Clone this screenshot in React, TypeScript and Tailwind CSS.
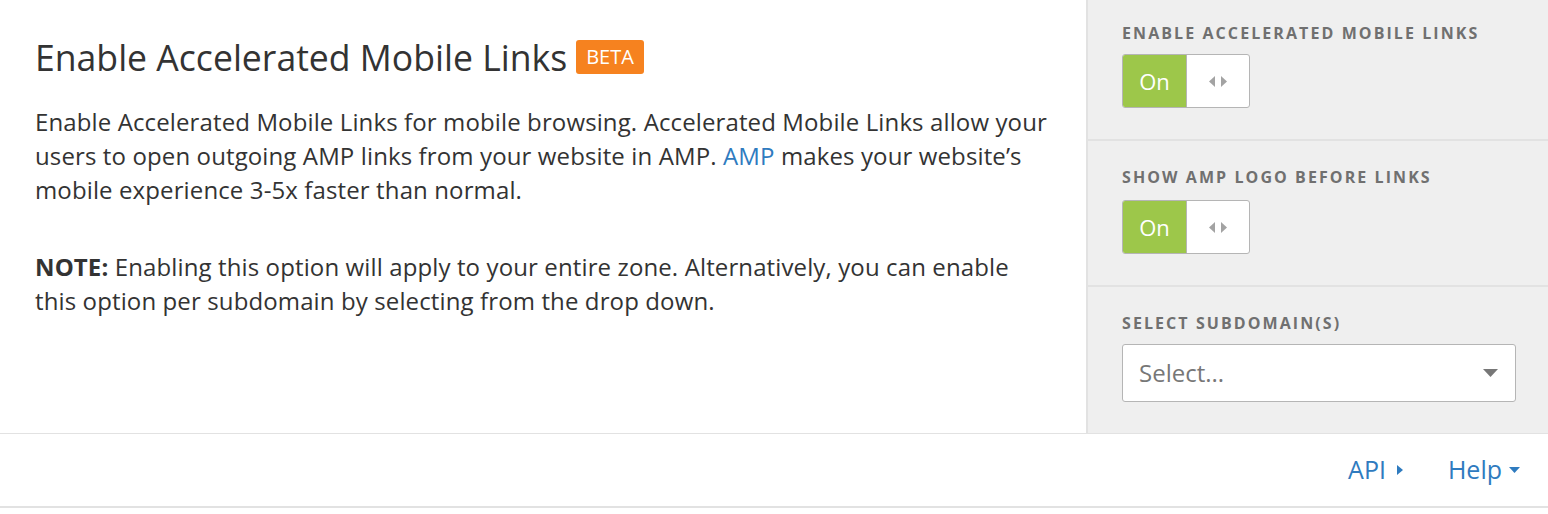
import React from 'react';

const Toggle = () => (
  <div className="flex h-[54px] w-[128px] overflow-hidden rounded-[3px] border border-[#b5b5b5] bg-white">
    <div className="flex w-[64px] items-center justify-center border-r border-[#b5b5b5] bg-[#9dc74a] text-[22px] text-white">
      On
    </div>
    <div className="flex flex-1 items-center justify-center gap-[6px]">
      <svg width="6" height="11" viewBox="0 0 6 11">
        <path d="M6 0 L0 5.5 L6 11 Z" fill="#a3a3a3" />
      </svg>
      <svg width="6" height="11" viewBox="0 0 6 11">
        <path d="M0 0 L6 5.5 L0 11 Z" fill="#a3a3a3" />
      </svg>
    </div>
  </div>
);

const Label = ({ children }: { children: React.ReactNode }) => (
  <div className="text-[16px] font-bold uppercase leading-none tracking-[0.13em] text-[#707070]">{children}</div>
);

export default function App() {
  return (
    <div className="min-h-[514px] bg-white font-['Open_Sans',sans-serif] text-[#333]">
      <div className="flex h-[434px] border-b border-[#e2e2e2]">
        <div className="flex-1 pl-[35px] pr-[20px] pt-[37px]">
          <div className="flex items-center">
            <h2 className="text-[35.6px] leading-[40px] text-[#333]">Enable Accelerated Mobile Links</h2>
            <span className="ml-[9px] rounded-[3px] bg-[#f6821f] px-[10px] py-[3px] text-[20px] leading-[28px] text-white">
              BETA
            </span>
          </div>
          <p className="mt-[28px] max-w-[1030px] text-[24px] leading-[34px] tracking-[0.12px]">
            Enable Accelerated Mobile Links for mobile browsing. Accelerated Mobile Links allow your users to open
            outgoing AMP links from your website in AMP. <span className="text-[#2f7bbf]">AMP</span> makes your
            website’s mobile experience 3-5x faster than normal.
          </p>
          <p className="mt-[43px] max-w-[995px] text-[24px] leading-[34px] tracking-[0.12px]">
            <span className="font-bold">NOTE:</span> Enabling this option will apply to your entire zone.
            Alternatively, you can enable this option per subdomain by selecting from the drop down.
          </p>
        </div>
        <div className="flex w-[462px] flex-col border-l-2 border-[#e2e2e2] bg-[#efefef]">
          <div className="h-[141px] border-b-2 border-[#e2e2e2] pl-[34px] pt-[25px]">
            <Label>Enable Accelerated Mobile Links</Label>
            <div className="mt-[13px]">
              <Toggle />
            </div>
          </div>
          <div className="h-[146px] border-b-2 border-[#e2e2e2] pl-[34px] pt-[28px]">
            <Label>Show AMP Logo Before Links</Label>
            <div className="mt-[15px]">
              <Toggle />
            </div>
          </div>
          <div className="flex-1 pl-[34px] pr-[32px] pt-[28px]">
            <Label>Select Subdomain(s)</Label>
            <div className="mt-[13px] flex h-[58px] items-center justify-between rounded-[3px] border border-[#b5b5b5] bg-white pl-[16px] pr-[17px]">
              <span className="text-[24px] text-[#777]">Select...</span>
              <svg width="15" height="8" viewBox="0 0 15 8">
                <path d="M0 0 L15 0 L7.5 8 Z" fill="#777" />
              </svg>
            </div>
          </div>
        </div>
      </div>
      <div className="flex h-[74px] items-center justify-end border-b-2 border-[#e2e2e2] pr-[28px] text-[25px] text-[#2f7bbf]">
        <span className="flex items-center gap-[11px]">
          API
          <svg width="6" height="10" viewBox="0 0 6 10">
            <path d="M0 0 L6 5 L0 10 Z" fill="#2f7bbf" />
          </svg>
        </span>
        <span className="ml-[45px] flex items-center gap-[7px]">
          Help
          <svg width="11" height="6" viewBox="0 0 11 6">
            <path d="M0 0 L11 0 L5.5 6 Z" fill="#2f7bbf" />
          </svg>
        </span>
      </div>
    </div>
  );
}
